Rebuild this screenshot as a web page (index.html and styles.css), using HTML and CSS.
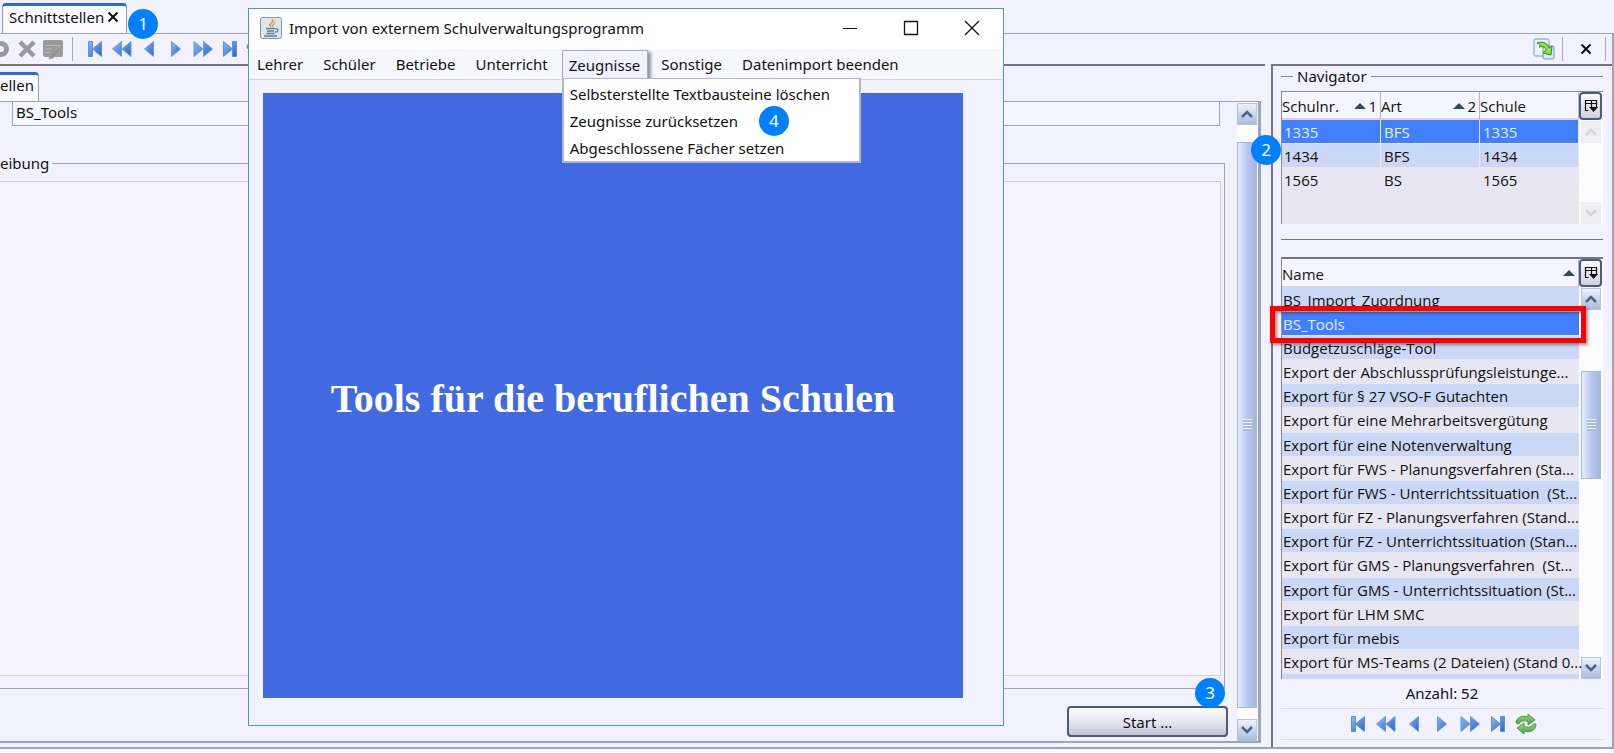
FILE: index.html
```html
<!DOCTYPE html>
<html lang="de">
<head>
<meta charset="utf-8">
<title>Schnittstellen</title>
<link rel="stylesheet" href="styles.css">
</head>
<body>
<svg class="defs" aria-hidden="true">
  <defs>
    <linearGradient id="blue" x1="0" y1="0" x2="1" y2="1"><stop offset="0" stop-color="#8fbdf0"/><stop offset="1" stop-color="#2a5fd0"/></linearGradient>
    <linearGradient id="green" x1="0" y1="0" x2="0" y2="1"><stop offset="0" stop-color="#9bd47c"/><stop offset="1" stop-color="#4f9f4a"/></linearGradient>
    <symbol id="first" viewBox="0 0 20 18"><path d="M3.500 1.500h4v15h-4zM16.500 1.500v15L7.500 9z" fill="url(#blue)" stroke="#5c8fe0"/></symbol>
    <symbol id="rewind" viewBox="0 0 20 18"><path d="M9.500 1.500v15L.500 9zM19 1.500v15L10 9z" fill="url(#blue)" stroke="#6c9ae2"/></symbol>
    <symbol id="prev" viewBox="0 0 20 18"><path d="M14.500 1.500v15L5.500 9z" fill="url(#blue)" stroke="#6c9ae2"/></symbol>
    <symbol id="next" viewBox="0 0 20 18"><path d="M5.500 1.500v15l9-7.500z" fill="url(#blue)" stroke="#6c9ae2"/></symbol>
    <symbol id="forward" viewBox="0 0 20 18"><path d="M1 1.500v15L10 9zM10.500 1.500v15l9-7.500z" fill="url(#blue)" stroke="#6c9ae2"/></symbol>
    <symbol id="last" viewBox="0 0 20 18"><path d="M3.500 1.500v15L12.500 9zM12.500 1.500h4v15h-4z" fill="url(#blue)" stroke="#5c8fe0"/></symbol>
    <symbol id="reload" viewBox="0 0 22 22"><path d="M1 10C1 4 8 2 13 4V1l7 6-7 5V8.500C9 7 5 8 4 11z" fill="url(#green)" stroke="#4f9a50"/><path d="M21 11c0 7-7 9-12 7v3l-7-6 7-5v3.500c4 1.500 8 .500 9-2.500z" fill="url(#green)" stroke="#4f9a50"/></symbol>
    <symbol id="up" viewBox="0 0 12 8"><path d="M1 7l5-5 5 5" fill="none" stroke="currentColor" stroke-width="2.600"/></symbol>
    <symbol id="down" viewBox="0 0 12 8"><path d="M1 1l5 5 5-5" fill="none" stroke="currentColor" stroke-width="2.600"/></symbol>
    <symbol id="columns" viewBox="0 0 14 14"><path d="M4.500 11.500h-3v-10h11v7M1.500 4.500h11M7.500 1.500v7" fill="none" stroke="#111" stroke-width="1.200"/><path d="M5 8h9l-4.500 5z" fill="#111"/></symbol>
    <symbol id="cross" viewBox="0 0 12 12"><path d="M1.500 1.500l9 9M10.500 1.500l-9 9" fill="none" stroke="#111" stroke-width="2"/></symbol>
  </defs>
</svg>

<div class="app">
  <div class="tabs">
    <div class="tab">Schnittstellen <button class="plain" aria-label="Tab schließen"><svg width="12" height="12"><use href="#cross"/></svg></button><span class="badge badge-1">1</span></div>
  </div>

  <div class="frame">
    <div class="toolbar">
      <button class="plain" aria-label="Anhalten"><svg width="9" height="20" viewBox="0 0 9 20"><circle cx="1" cy="10" r="5.500" fill="none" stroke="#9a9a9a" stroke-width="5"/></svg></button>
      <button class="plain tool-x" aria-label="Löschen"><svg width="18" height="18" viewBox="0 0 18 18"><path d="M2 2l14 14M16 2L2 16" stroke="#999" stroke-width="4.500"/></svg></button>
      <button class="plain tool-form" aria-label="Bearbeiten"><svg width="22" height="21" viewBox="0 0 22 21"><rect x="1" y="1" width="20" height="17" rx="2" fill="#9a9a9a"/><path d="M3 6.500h16M3 10h7M3 13.500h5" stroke="#b8b8b8" fill="none"/><path d="M7 20l1-4 9-8 3 3-9 8z" fill="#939393" stroke="#a6a6a6"/></svg></button>
      <span class="divider"></span>
      <div class="nav-buttons">
        <button class="plain" aria-label="Erster"><svg width="20" height="18"><use href="#first"/></svg></button>
        <button class="plain" aria-label="Zurück blättern"><svg width="20" height="18"><use href="#rewind"/></svg></button>
        <button class="plain" aria-label="Vorheriger"><svg width="20" height="18"><use href="#prev"/></svg></button>
        <button class="plain" aria-label="Nächster"><svg width="20" height="18"><use href="#next"/></svg></button>
        <button class="plain" aria-label="Vor blättern"><svg width="20" height="18"><use href="#forward"/></svg></button>
        <button class="plain" aria-label="Letzter"><svg width="20" height="18"><use href="#last"/></svg></button>
        <button class="plain" aria-label="Aktualisieren"><svg width="22" height="22"><use href="#reload"/></svg></button>
      </div>
      <div class="toolbar-right">
        <button class="plain" aria-label="Übernehmen"><svg width="22" height="22" viewBox="0 0 22 22"><rect x="1" y="1" width="15" height="17" rx="1.500" fill="#e8f3fb" stroke="#6a9cc4"/><rect x="10" y="8" width="11" height="13" rx="1" fill="#d7e9f8" stroke="#6a9cc4"/><path d="M4 5c6-2 11 0 12 5l3-2-1 9-8-2 3-3c0-3-3-4-7-3 2-1 1-3-2-4z" fill="#8ee03c" stroke="#35852b"/></svg></button>
        <span class="divider"></span>
        <button class="plain" aria-label="Schließen"><svg width="12" height="12"><use href="#cross"/></svg></button>
        <span class="divider"></span>
      </div>
    </div>

    <div class="columns">
      <main class="main">
        <div class="tabs inner-tabs"><div class="tab inner-tab">ellen</div></div>
        <div class="pane">
          <div class="form">
            <input class="field" type="text" value="BS_Tools" aria-label="Name">
            <fieldset class="group">
              <legend>eibung</legend>
              <div class="description"></div>
            </fieldset>
            <div class="actions"><button class="start">Start ...</button><span class="badge badge-3">3</span></div>
          </div>
          <div class="scrollbar">
            <button class="arrow" aria-label="Nach oben"><svg width="12" height="8"><use href="#up"/></svg></button>
            <div class="track main-track"><div class="thumb"></div></div>
            <button class="arrow" aria-label="Nach unten"><svg width="12" height="8"><use href="#down"/></svg></button>
          </div>
        </div>
      </main>

      <aside class="side">
        <span class="badge badge-2">2</span>
        <h2 class="side-title">Navigator</h2>
        <div class="grid schools">
          <table>
            <thead><tr><th>Schulnr.<span class="sort">1</span></th><th>Art<span class="sort">2</span></th><th>Schule</th></tr></thead>
            <tbody>
              <tr class="selected"><td>1335</td><td>BFS</td><td>1335</td></tr>
              <tr class="even"><td>1434</td><td>BFS</td><td>1434</td></tr>
              <tr><td>1565</td><td>BS</td><td>1565</td></tr>
            </tbody>
          </table>
          <div class="grid-side">
            <button class="config" aria-label="Spalten"><svg width="14" height="14"><use href="#columns"/></svg></button>
            <div class="scrollbar disabled">
              <button class="arrow" disabled aria-label="Nach oben"><svg width="12" height="8"><use href="#up"/></svg></button>
              <div class="track"></div>
              <button class="arrow" disabled aria-label="Nach unten"><svg width="12" height="8"><use href="#down"/></svg></button>
            </div>
          </div>
        </div>
        <div class="splitter"></div>
        <div class="grid names">
          <table>
            <thead><tr><th>Name<span class="sort"></span></th></tr></thead>
            <tbody>
              <tr class="even"><td>BS_Import_Zuordnung</td></tr>
              <tr class="selected"><td>BS_Tools</td></tr>
              <tr class="even"><td>Budgetzuschläge-Tool</td></tr>
              <tr><td>Export der Abschlussprüfungsleistunge...</td></tr>
              <tr class="even"><td>Export für § 27 VSO-F Gutachten</td></tr>
              <tr><td>Export für eine Mehrarbeitsvergütung</td></tr>
              <tr class="even"><td>Export für eine Notenverwaltung</td></tr>
              <tr><td>Export für FWS - Planungsverfahren (Sta...</td></tr>
              <tr class="even"><td>Export für FWS - Unterrichtssituation  (St...</td></tr>
              <tr><td>Export für FZ - Planungsverfahren (Stand...</td></tr>
              <tr class="even"><td>Export für FZ - Unterrichtssituation (Stan...</td></tr>
              <tr><td>Export für GMS - Planungsverfahren  (St...</td></tr>
              <tr class="even"><td>Export für GMS - Unterrichtssituation (St...</td></tr>
              <tr><td>Export für LHM SMC</td></tr>
              <tr class="even"><td>Export für mebis</td></tr>
              <tr><td>Export für MS-Teams (2 Dateien) (Stand 0...</td></tr>
              <tr class="even partial"><td></td></tr>
            </tbody>
          </table>
          <div class="grid-side">
            <button class="config" aria-label="Spalten"><svg width="14" height="14"><use href="#columns"/></svg></button>
            <div class="scrollbar">
              <button class="arrow" aria-label="Nach oben"><svg width="12" height="8"><use href="#up"/></svg></button>
              <div class="track names-track"><div class="thumb"></div></div>
              <button class="arrow" aria-label="Nach unten"><svg width="12" height="8"><use href="#down"/></svg></button>
            </div>
          </div>
          <div class="highlight"></div>
        </div>
        <p class="count">Anzahl: 52</p>
        <div class="nav-buttons side-nav">
          <button class="plain" aria-label="Erster"><svg width="20" height="18"><use href="#first"/></svg></button>
          <button class="plain" aria-label="Zurück blättern"><svg width="20" height="18"><use href="#rewind"/></svg></button>
          <button class="plain" aria-label="Vorheriger"><svg width="20" height="18"><use href="#prev"/></svg></button>
          <button class="plain" aria-label="Nächster"><svg width="20" height="18"><use href="#next"/></svg></button>
          <button class="plain" aria-label="Vor blättern"><svg width="20" height="18"><use href="#forward"/></svg></button>
          <button class="plain" aria-label="Letzter"><svg width="20" height="18"><use href="#last"/></svg></button>
          <button class="plain" aria-label="Aktualisieren"><svg width="22" height="22"><use href="#reload"/></svg></button>
        </div>
      </aside>
    </div>
  </div>

  <section class="window">
    <header class="titlebar">
      <svg width="22" height="22" viewBox="0 0 22 22"><rect x=".500" y=".500" width="21" height="21" rx="2" fill="#dfe6ea" stroke="#8196a5"/><path d="M11 10c-5-3 3-4 1-8 4 3-3 4-1 8zM13 10c-2-2 1-3 2-5 0 3-3 3-2 5z" fill="#e88a30" stroke="#e88a30" stroke-width=".600"/><path d="M6 11.500h9M7 14h7M6.500 16.500h8M4 19h13M15 12c4-1 4 3 0 3" fill="none" stroke="#5a7f98" stroke-width="1.300"/></svg>
      <h1>Import von externem Schulverwaltungsprogramm</h1>
      <div class="window-buttons">
        <button class="plain" aria-label="Minimieren"><svg width="16" height="16" viewBox="0 0 16 16"><path d="M1 8.500h14" stroke="#111"/></svg></button>
        <button class="plain" aria-label="Maximieren"><svg width="16" height="16" viewBox="0 0 16 16"><path d="M1.500 1.500h13v13h-13z" fill="none" stroke="#111" stroke-width="1.300"/></svg></button>
        <button class="plain" aria-label="Fenster schließen"><svg width="16" height="16" viewBox="0 0 16 16"><path d="M1 1l14 14M15 1L1 15" fill="none" stroke="#111" stroke-width="1.300"/></svg></button>
      </div>
    </header>
    <nav class="menubar">
      <button>Lehrer</button>
      <button>Schüler</button>
      <button>Betriebe</button>
      <button>Unterricht</button>
      <div class="open">
        <button>Zeugnisse</button>
        <div class="popup">
          <button>Selbsterstellte Textbausteine löschen</button>
          <button>Zeugnisse zurücksetzen</button>
          <button>Abgeschlossene Fächer setzen</button>
          <span class="badge badge-4">4</span>
        </div>
      </div>
      <button>Sonstige</button>
      <button>Datenimport beenden</button>
    </nav>
    <div class="canvas">Tools für die beruflichen Schulen</div>
  </section>
</div>
</body>
</html>
```
FILE: styles.css
```css
* { box-sizing: border-box; }

body {
  margin: 0;
  background: #fcfcff;
  color: #111;
  font: 15px/24px "Noto Sans", "Open Sans", sans-serif;
}

button, input { font: inherit; color: inherit; }
svg { display: block; flex: none; }
h1, h2, p { margin: 0; font-size: inherit; font-weight: normal; }

.defs { position: absolute; width: 0; height: 0; }

.plain {
  display: inline-flex;
  align-items: center;
  justify-content: center;
  padding: 0;
  border: 0;
  background: none;
}

.app {
  position: relative;
  display: flex;
  flex-direction: column;
  min-height: 100vh;
  padding-bottom: 4px;
  background: linear-gradient(#f2f2ff, #f2f2ff) top / 100% calc(100% - 4px) no-repeat;
  overflow: hidden;
}

.tabs { display: flex; height: 33px; padding: 3px 2px 0; }

.tab {
  position: relative;
  display: flex;
  align-items: center;
  gap: 3px;
  padding: 0 7px 6px 6px;
  border: 1px solid #8f9bb0;
  border-top: 3px solid #2f68d8;
  border-bottom: 0;
  border-radius: 4px 4px 0 0;
  background: #fafaff;
}

.frame {
  display: flex;
  flex: 1;
  flex-direction: column;
  border: solid #9aa5b8;
  border-width: 1px 2px 2px 0;
}

.toolbar { display: flex; align-items: center; height: 30px; padding-right: 6px; }
.tool-x { margin-left: 9px; }
.tool-form { margin: 0 8px 0 6px; }
.divider { width: 1px; height: 24px; background: #aaabb5; }

.nav-buttons { display: flex; margin-left: 8px; }
.nav-buttons .plain { width: 27px; height: 22px; }
.toolbar-right { display: flex; align-items: center; gap: 17px; margin-left: auto; }
.toolbar-right .plain + .divider { margin-left: -10px; }
.toolbar-right .plain:nth-child(3) + .divider { margin-left: -4px; }

.columns { display: flex; flex: 1; gap: 6px; }

.main {
  display: flex;
  flex: 1;
  flex-direction: column;
  min-width: 0;
  padding: 6px 4px 4px 0;
  border-top: 2px solid #74757d;
}

.inner-tabs { height: 29px; padding: 0; }
.inner-tab { padding: 0 4px 6px 0; border-left: 0; border-radius: 0 4px 0 0; }

.pane {
  display: flex;
  flex: 1;
  border: solid #9aa5b8;
  border-width: 1px 3px 2px 0;
}

.form { display: flex; flex: 1; flex-direction: column; padding-right: 9px; }

.field {
  height: 24px;
  margin: 0 8px 25px 12px;
  padding: 0 3px 3px;
  border: 1px solid #9aa5b8;
  border-top: 0;
  background: #f6f6ff;
}

.group {
  display: flex;
  flex: 1;
  margin: 0 3px 0 0;
  padding: 6px 3px 12px 0;
  border: 1px solid #a3a3ad;
  border-left: 0;
}
.group legend { padding: 0 3px 0 0; }
.description {
  flex: 1;
  border: 1px solid #cfcfda;
  border-left: 0;
  background: #f5f4ff;
}

.actions { position: relative; display: flex; justify-content: flex-end; padding: 17px 0 4px; }
.start {
  width: 161px;
  height: 31px;
  padding: 0;
  border: 2px solid #4f5b70;
  border-radius: 4px;
  background: linear-gradient(#fcfcff, #e8e8f2 50%, #c4c4d6);
}

.scrollbar { display: flex; flex-direction: column; width: 21px; padding-top: 1px; background: #fcfcff; }
.arrow {
  display: flex;
  align-items: center;
  justify-content: center;
  width: 20px;
  height: 22px;
  padding: 0;
  border: 1px solid #b8c4dc;
  background: linear-gradient(#eef2fc, #a9bbde);
  color: #4d6488;
}
.disabled .arrow { border-color: #ececf2; background: #f0f0f4; color: #d4d4da; }
.track { flex: 1; display: flex; flex-direction: column; }
.main-track { padding: 17px 0 11px; }
.names-track { padding: 61px 0 178px; }
.thumb {
  flex: 1;
  width: 20px;
  border: 1px solid #a8b8d8;
  background:
    repeating-linear-gradient(#f4f7ff 0 1px, #a7b9de 1px 3px) center / 9px 12px no-repeat,
    linear-gradient(90deg, #e6eeff, #b8caf4 50%, #a5b4da);
}

.side {
  position: relative;
  display: flex;
  flex-direction: column;
  width: 341px;
  padding: 0 9px 0 8px;
  border: solid #74757d;
  border-width: 2px 0 0 2px;
}

.side-title { display: flex; align-items: center; gap: 4px; height: 20px; margin-bottom: 5px; }
.side-title::before, .side-title::after { content: ""; width: 12px; height: 1px; background: #85858d; }
.side-title::after { flex: 1; }

.grid {
  position: relative;
  display: flex;
  border: solid #8a8a93;
  border-width: 1px 0 0 1px;
  background: #e8e7f1;
  font-family: "Open Sans", "Noto Sans", sans-serif;
}
.grid table {
  position: relative;
  z-index: 1;
  width: calc(100% - 24px);
  table-layout: fixed;
  border-collapse: separate;
  border-spacing: 0;
  align-self: flex-start;
}
.grid th, .grid td { white-space: pre; text-align: left; font-weight: normal; }
.grid th {
  position: relative;
  height: 28px;
  padding: 2px 0 0;
  border-right: 1px solid #b8b8c2;
  border-bottom: 2px solid #d6d6e0;
  background: #f5f5ff;
}
.grid td { height: 24px; padding: 0 0 0 2px; border-bottom: 1px solid #e4e8f6; line-height: 22px; }
.grid .even td { background: #cad8f6; }
.grid .selected td { background: #407fff; color: #e6eeff; }
.schools { height: 133px; }
.schools td { border-right: 1px solid #e4e8f6; }
.schools td + td { padding-left: 3px; }
.sort { position: absolute; right: 3px; top: 2px; display: flex; align-items: center; gap: 2px; height: 24px; }
.sort::before { content: ""; border: solid transparent; border-width: 0 6px 6px; border-bottom-color: #33495f; }

.grid-side { display: flex; flex: none; flex-direction: column; width: 24px; background: #fcfcff; }
.grid-side .scrollbar { flex: 1; margin-left: 2px; }
.config {
  display: flex;
  align-items: center;
  justify-content: center;
  width: 23px;
  height: 28px;
  padding: 0;
  border: 2px solid #4c5d7b;
  border-radius: 4px;
  background: linear-gradient(#fcfcff, #d0d0e0);
}

.splitter { height: 18px; margin-top: 15px; border-top: 1px solid #74757d; }

.names { border-top: 2px solid #74757d; }
.names th { height: 29px; }
.names td { padding-left: 1px; }
.names tr:nth-child(6n) td { height: 25px; }
.names .partial td { height: 5px; border: 0; line-height: 0; }
.highlight {
  position: absolute;
  z-index: 2;
  left: -12px;
  right: 17px;
  top: 47px;
  height: 37px;
  border: 5px solid #f00;
  box-shadow: 2px 2px 3px #0006, inset 2px 2px 3px #0006;
}

.count { padding-top: 2px; height: 29px; text-align: center; }
.side-nav { justify-content: center; margin: 0; padding: 4px 0; border: solid #dedeea; border-width: 1px 0; }
.side-nav .plain { width: 28px; }

.window {
  position: absolute;
  z-index: 3;
  left: 248px;
  top: 8px;
  display: flex;
  flex-direction: column;
  width: 756px;
  height: 718px;
  border: 1px solid #4a98c8;
  background: #f2f2ff;
}
.titlebar { display: flex; align-items: center; gap: 7px; height: 40px; padding: 0 23px 2px 11px; background: #fff; }
.window-buttons { display: flex; gap: 45px; margin-left: auto; }

.menubar { display: flex; height: 31px; padding-top: 1px; border-bottom: 1px solid #d4d4e0; background: #f7f7fe; }
.menubar button { padding: 0 12px 1px 8px; border: 0; background: none; text-align: left; white-space: nowrap; }
.menubar .open { position: relative; display: flex; margin: 0 5px 0 2px; border: 1px solid #a9a9bb; border-bottom: 0; background: #f2f2ff; box-shadow: 3px 2px 3px #0006; }
.menubar .open > button { padding: 0 7px 1px 6px; }
.popup {
  position: absolute;
  left: -1px;
  top: 27px;
  display: flex;
  flex-direction: column;
  width: 299px;
  padding: 1px 0 0;
  border: 2px solid #b4b4c6;
  border-top-width: 1px;
  background: #fff;
}
.menubar .popup button { height: 27px; padding: 0 6px; }

.canvas {
  display: flex;
  flex: 1;
  align-items: center;
  justify-content: center;
  margin: 13px 40px 27px 14px;
  padding-top: 6px;
  background: #4169e1;
  color: #fff;
  font: bold 40px/44px "Liberation Serif", serif;
}

.badge {
  position: absolute;
  z-index: 2;
  display: flex;
  align-items: center;
  justify-content: center;
  width: 30px;
  height: 30px;
  border-radius: 50%;
  background: #0080ff;
  color: #fff;
  font-size: 17px;
}
.badge-1 { left: 125px; top: 3px; }
.badge-2 { left: -22px; top: 69px; }
.badge-3 { right: 3px; top: -11px; }
.badge-4 { left: 195px; top: 27px; }
```
